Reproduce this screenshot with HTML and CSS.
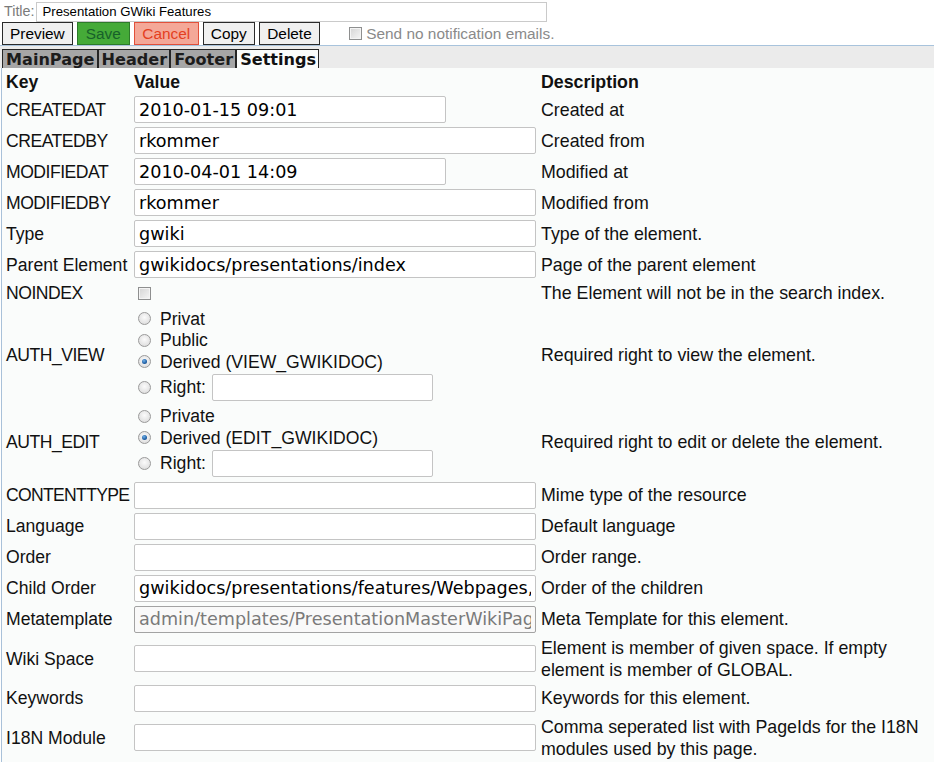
FILE: index.html
```html
<!DOCTYPE html>
<html>
<head>
<meta charset="utf-8">
<title>Presentation GWiki Features</title>
<link rel="stylesheet" href="styles.css">
</head>
<body>
<div class="titlebar">
  <label class="title-label">Title:</label>
  <input class="title-input" type="text" value="Presentation GWiki Features">
</div>
<div class="actions">
  <button class="btn">Preview</button>
  <button class="btn btn-save">Save</button>
  <button class="btn btn-cancel">Cancel</button>
  <button class="btn">Copy</button>
  <button class="btn btn-delete">Delete</button>
  <label class="notify"><input type="checkbox" class="cb">Send no notification emails.</label>
</div>
<div class="tabbar">
  <span class="tab">MainPage</span><span class="tab">Header</span><span class="tab">Footer</span><span class="tab active">Settings</span>
</div>
<div class="panel">
  <table class="settings">
    <colgroup><col class="c-key"><col class="c-val"><col class="c-desc"></colgroup>
    <tr><th>Key</th><th>Value</th><th class="desc">Description</th></tr>
    <tr><td class="caps">CREATEDAT</td><td><input class="field short" type="text" value="2010-01-15 09:01"></td><td class="desc">Created at</td></tr>
    <tr><td class="caps">CREATEDBY</td><td><input class="field long" type="text" value="rkommer"></td><td class="desc">Created from</td></tr>
    <tr><td class="caps">MODIFIEDAT</td><td><input class="field short" type="text" value="2010-04-01 14:09"></td><td class="desc">Modified at</td></tr>
    <tr><td class="caps">MODIFIEDBY</td><td><input class="field long" type="text" value="rkommer"></td><td class="desc">Modified from</td></tr>
    <tr><td>Type</td><td><input class="field long" type="text" value="gwiki"></td><td class="desc">Type of the element.</td></tr>
    <tr><td>Parent Element</td><td><input class="field long" type="text" value="gwikidocs/presentations/index"></td><td class="desc">Page of the parent element</td></tr>
    <tr><td class="caps">NOINDEX</td><td><div class="opt"><input type="checkbox" class="cb"></div></td><td class="desc">The Element will not be in the search index.</td></tr>
    <tr><td class="caps">AUTH_VIEW</td><td>
      <div class="opt"><input type="radio" class="rb" name="av">Privat</div>
      <div class="opt"><input type="radio" class="rb" name="av">Public</div>
      <div class="opt"><input type="radio" class="rb" name="av" checked>Derived (VIEW_GWIKIDOC)</div>
      <div class="opt opt-right"><input type="radio" class="rb" name="av">Right:<input class="field right" type="text"></div>
    </td><td class="desc">Required right to view the element.</td></tr>
    <tr><td class="caps">AUTH_EDIT</td><td>
      <div class="opt"><input type="radio" class="rb" name="ae">Private</div>
      <div class="opt"><input type="radio" class="rb" name="ae" checked>Derived (EDIT_GWIKIDOC)</div>
      <div class="opt opt-right"><input type="radio" class="rb" name="ae">Right:<input class="field right" type="text"></div>
    </td><td class="desc">Required right to edit or delete the element.</td></tr>
    <tr><td class="caps tight">CONTENTTYPE</td><td><input class="field long" type="text"></td><td class="desc">Mime type of the resource</td></tr>
    <tr><td>Language</td><td><input class="field long" type="text"></td><td class="desc">Default language</td></tr>
    <tr><td>Order</td><td><input class="field long" type="text"></td><td class="desc">Order range.</td></tr>
    <tr><td>Child Order</td><td><input class="field long" type="text" value="gwikidocs/presentations/features/Webpages,gwikidocs/presentations/features/Blog"></td><td class="desc">Order of the children</td></tr>
    <tr><td>Metatemplate</td><td><input class="field long disabled" type="text" value="admin/templates/PresentationMasterWikiPageTemplate" disabled></td><td class="desc">Meta Template for this element.</td></tr>
    <tr><td>Wiki Space</td><td><input class="field long" type="text"></td><td class="desc">Element is member of given space. If empty element is member of GLOBAL.</td></tr>
    <tr><td>Keywords</td><td><input class="field long" type="text"></td><td class="desc">Keywords for this element.</td></tr>
    <tr><td>I18N Module</td><td><input class="field long" type="text"></td><td class="desc">Comma seperated list with PageIds for the I18N modules used by this page.</td></tr>
  </table>
</div>
</body>
</html>
```
FILE: styles.css
```css
html, body {
  margin: 0;
  padding: 0;
  background: #ffffff;
  font-family: "Liberation Sans", Arial, sans-serif;
  color: #111;
}

.titlebar {
  display: flex;
  align-items: center;
  height: 22px;
  padding-left: 4px;
}
.title-label {
  font-size: 14.3px;
  color: #7a7a7a;
  margin-right: 2px;
}
.title-input {
  box-sizing: border-box;
  width: 511px;
  height: 20px;
  margin-top: 1px;
  border: 1px solid #cacaca;
  padding: 0 5px;
  font: 13.2px "Liberation Sans", Arial, sans-serif;
  color: #000;
  outline: none;
}

.actions {
  display: flex;
  align-items: center;
  gap: 4px;
  height: 23px;
  padding-left: 2px;
}
.btn {
  box-sizing: border-box;
  height: 23px;
  padding: 0 7px;
  border: 1px solid #2a2a2a;
  background: #f0f0f0;
  color: #000;
  font: 15.4px "Liberation Sans", Arial, sans-serif;
  line-height: 21px;
}
.btn-save {
  background: #45aa38;
  border-color: #2d7a2a;
  color: #17612a;
  padding: 0 8px;
}
.btn-cancel {
  background: #f4a898;
  border-color: #e2503a;
  color: #e4401f;
  padding: 0 7.5px;
}
.btn-delete {
  padding: 0 7.5px;
}
.notify {
  display: flex;
  align-items: center;
  margin-left: 25px;
  font-size: 15.4px;
  color: #8a8a8a;
}

.cb {
  -webkit-appearance: none;
  appearance: none;
  box-sizing: border-box;
  width: 13px;
  height: 13px;
  margin: 0 4px 0 0;
  border: 1px solid #8e8f8f;
  background: linear-gradient(135deg, #d4d4d4, #f6f6f6);
  box-shadow: inset 0 0 0 1px #f4f4f4;
}

.tabbar {
  display: flex;
  align-items: flex-end;
  height: 23px;
  box-sizing: border-box;
  border-top: 1px solid #a8c3dc;
  background: #ebebeb;
  padding-left: 2px;
}
.tab {
  box-sizing: border-box;
  height: 19px;
  line-height: 19px;
  padding: 0 2px 0 3px;
  border: 1px solid #262626;
  border-bottom: none;
  background: #a6a6a6;
  color: #1c1c1c;
  font: bold 16.1px "DejaVu Sans", Verdana, sans-serif;
}
.tab.active {
  background: #fafcfb;
  color: #111;
}

.panel {
  margin-left: 1px;
  border-left: 1px solid #a9c1d9;
  background: #fafcfb;
  padding-left: 2px;
  min-height: 693px;
}

.settings {
  table-layout: fixed;
  width: 930px;
  border-collapse: separate;
  border-spacing: 0;
}
.c-key { width: 128px; }
.c-val { width: 406px; }

.settings th {
  text-align: left;
  font-weight: bold;
  font-size: 17.6px;
  line-height: 20px;
  padding: 4px 2px 2px 2px;
  color: #111;
}
.settings td {
  padding: 2px;
  font-size: 17.6px;
  line-height: 22px;
  vertical-align: middle;
  color: #111;
  white-space: nowrap;
}
.settings td.caps {
  letter-spacing: -0.5px;
}
.settings td.caps.tight {
  letter-spacing: -0.7px;
}
.settings th.desc,
.settings td.desc {
  padding-left: 3px;
  white-space: normal;
  font-size: 17.8px;
}

.field {
  display: block;
  box-sizing: border-box;
  height: 27px;
  margin: 0;
  padding: 0 4px;
  border: 1px solid #c4c4c4;
  border-radius: 2px;
  background: #fff;
  color: #000;
  font: 17.6px "DejaVu Sans", Verdana, sans-serif;
  outline: none;
}
.field.long { width: 402px; }
.field.short { width: 312px; }
.field.right {
  display: inline-block;
  width: 221px;
  margin-left: 6px;
}
.field.disabled {
  border-color: #a3a3a3;
  background: #f9f9f9;
  color: #7a7a7a;
}

.opt {
  display: flex;
  align-items: center;
  height: 21.5px;
  padding-left: 4px;
}
.opt .cb { margin: 0; }
.opt-right { height: 29px; }

.rb {
  -webkit-appearance: none;
  appearance: none;
  box-sizing: border-box;
  width: 13px;
  height: 13px;
  margin: 0 9px 0 0;
  border-radius: 50%;
  border: 1px solid #9a9a9a;
  background: radial-gradient(circle at 50% 40%, #fbfbfb 0%, #e2e2e2 70%, #cfcfcf 100%);
  position: relative;
}
.rb:checked::after {
  content: "";
  position: absolute;
  left: 3px;
  top: 3px;
  width: 5px;
  height: 5px;
  border-radius: 50%;
  background: radial-gradient(circle at 40% 35%, #6fb0e8 0%, #1f5fa4 60%, #123f75 100%);
}
```
